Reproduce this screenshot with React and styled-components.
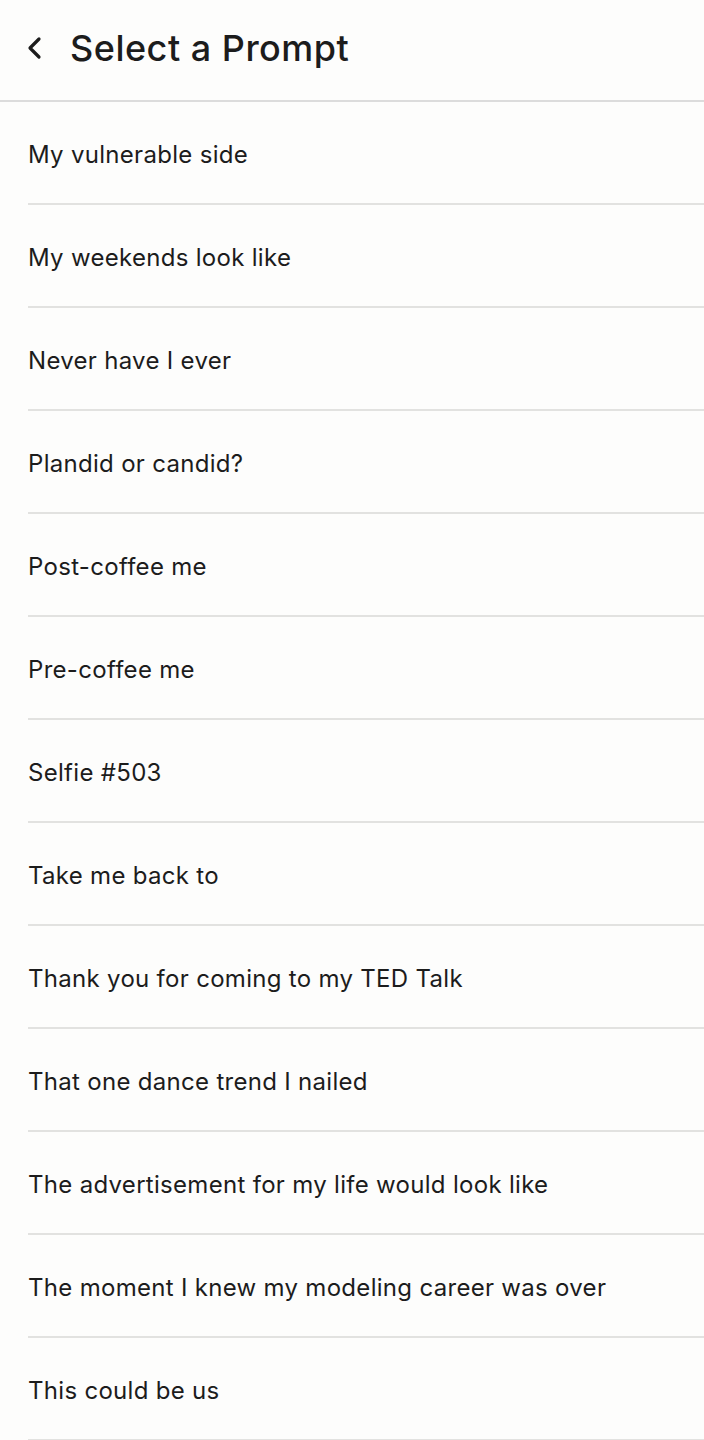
import React from "react";
import styled, { createGlobalStyle } from "styled-components";

const prompts = [
    "My vulnerable side",
    "My weekends look like",
    "Never have I ever",
    "Plandid or candid?",
    "Post-coffee me",
    "Pre-coffee me",
    "Selfie #503",
    "Take me back to",
    "Thank you for coming to my TED Talk",
    "That one dance trend I nailed",
    "The advertisement for my life would look like",
    "The moment I knew my modeling career was over",
    "This could be us",
];

export default function App() {
    return (
        <>
            <GlobalStyle />
            <Page>
                <Header>
                    <BackButton aria-label="Back">
                        <svg width="18" height="24" viewBox="0 0 18 24" fill="none">
                            <path d="M13 3 L4 12 L13 21" stroke="#1c1c1c" strokeWidth="3.2" strokeLinecap="round" strokeLinejoin="round" />
                        </svg>
                    </BackButton>
                    <Title>Select a Prompt</Title>
                </Header>
                <List>
                    {prompts.map((p) => (
                        <Row key={p}>
                            <RowText>{p}</RowText>
                        </Row>
                    ))}
                </List>
            </Page>
        </>
    );
}

const GlobalStyle = createGlobalStyle`
    body {
        margin: 0;
        background: #fdfdfc;
        font-family: Inter, "Noto Sans", sans-serif;
        color: #1c1c1c;
    }
`;

const Page = styled.div`
    width: 704px;
    min-height: 1440px;
    background: #fdfdfc;
`;

const Header = styled.header`
    height: 102px;
    box-sizing: border-box;
    display: flex;
    align-items: center;
    gap: 26px;
    padding: 0 0 4px 26px;
    border-bottom: 2px solid #dcdcdc;
`;

const BackButton = styled.button`
    border: none;
    background: none;
    padding: 0;
    width: 18px;
    height: 24px;
    display: flex;
    align-items: center;
    justify-content: center;
    cursor: pointer;
`;

const Title = styled.h1`
    margin: 0;
    font-size: 36px;
    font-weight: 500;
    letter-spacing: 0.5px;
`;

const List = styled.ul`
    list-style: none;
    margin: 0;
    padding: 0 0 0 28px;
`;

const Row = styled.li`
    height: 103px;
    box-sizing: border-box;
    padding-top: 3px;
    display: flex;
    align-items: center;
    border-bottom: 2px solid #e2e2e0;
`;

const RowText = styled.span`
    font-size: 24px;
    font-weight: 400;
    letter-spacing: 0.3px;
`;
